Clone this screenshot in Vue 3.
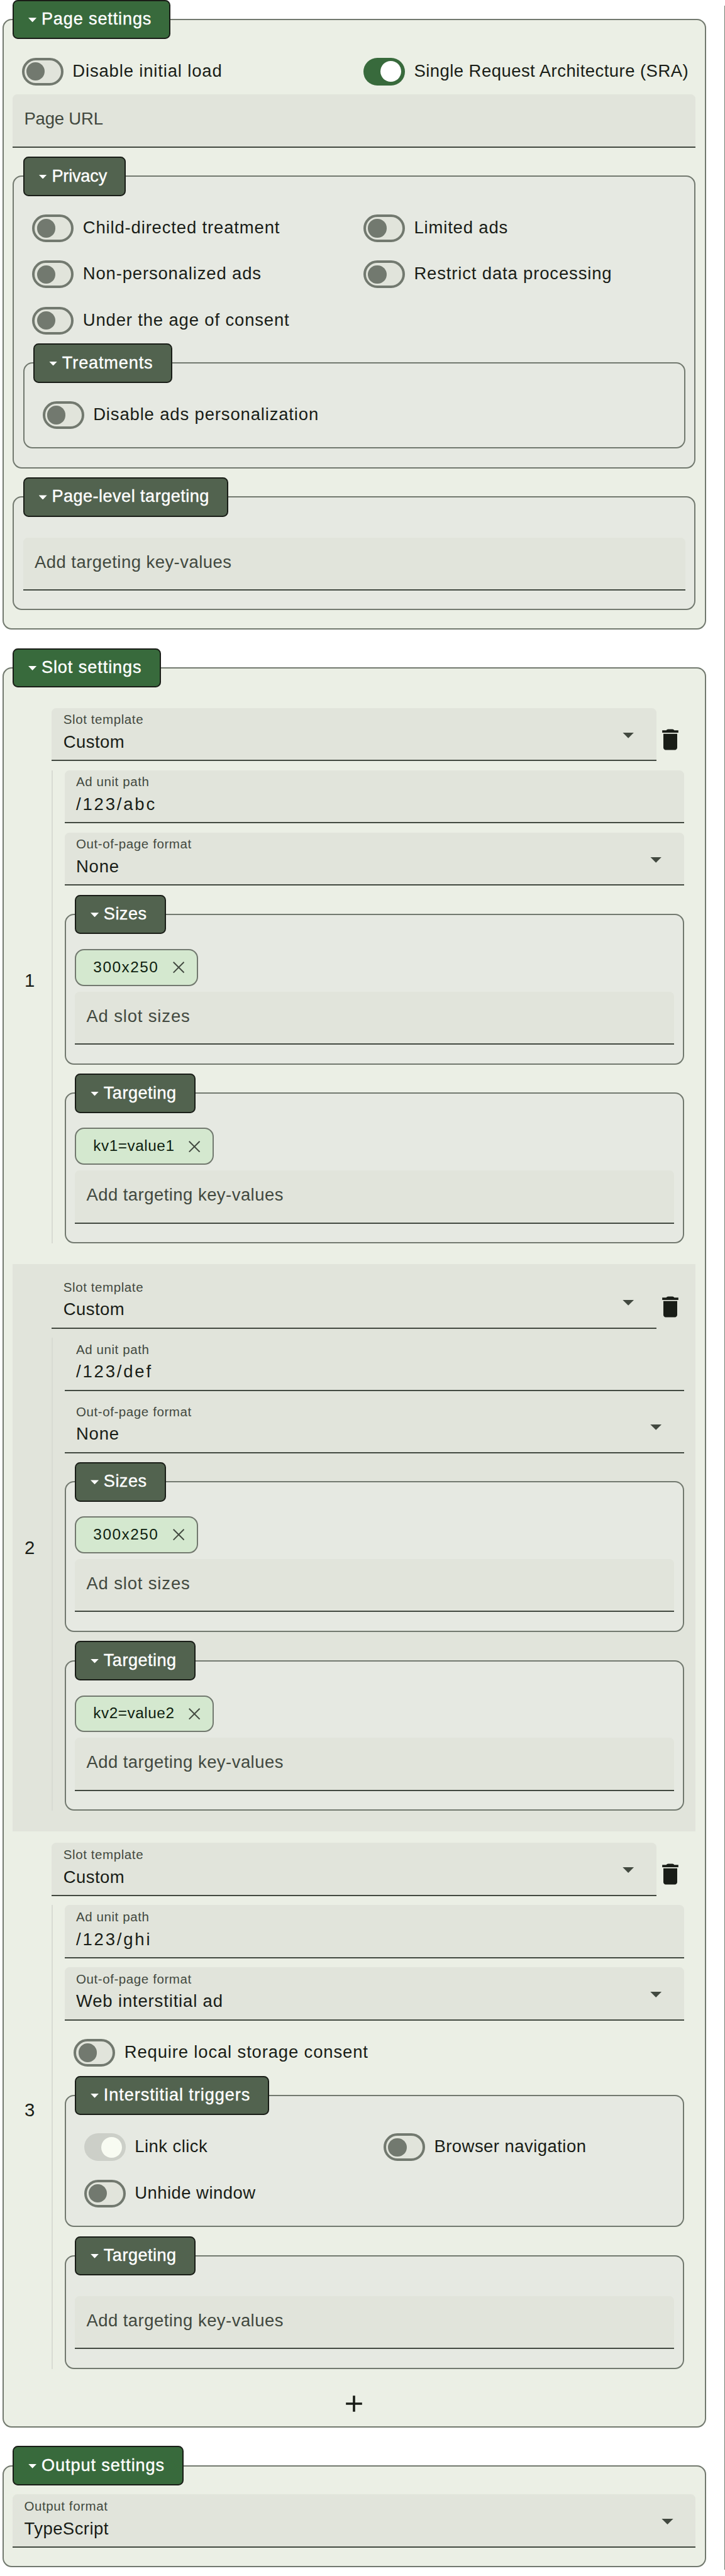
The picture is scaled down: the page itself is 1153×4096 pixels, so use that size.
<script setup>
import { ref } from 'vue'

const privacy = [
  'Child-directed treatment',
  'Limited ads',
  'Non-personalized ads',
  'Restrict data processing',
  'Under the age of consent',
]

const slots = ref([
  { path: '/123/abc', format: 'None', sizes: ['300x250'], targeting: ['kv1=value1'] },
  { path: '/123/def', format: 'None', sizes: ['300x250'], targeting: ['kv2=value2'] },
  {
    path: '/123/ghi',
    format: 'Web interstitial ad',
    triggers: [
      { label: 'Link click', locked: true },
      { label: 'Browser navigation' },
      { label: 'Unhide window' },
    ],
    targeting: [],
  },
])
</script>

<template>
  <div class="page">
    <main class="settings">
      <fieldset class="group primary">
        <legend><i class="caret"></i><span>Page settings</span></legend>
        <div class="switches">
          <label class="switch"><i class="track"></i><span>Disable initial load</span></label>
          <label class="switch"><i class="track on"></i><span class="snug">Single Request Architecture (SRA)</span></label>
        </div>
        <div class="field"><span class="placeholder tight">Page URL</span></div>

        <fieldset class="group">
          <legend><i class="caret"></i><span class="tight">Privacy</span></legend>
          <div class="switches">
            <label v-for="p in privacy" :key="p" class="switch"><i class="track"></i><span>{{ p }}</span></label>
          </div>
          <fieldset class="group">
            <legend><i class="caret"></i><span>Treatments</span></legend>
            <div class="switches">
              <label class="switch"><i class="track"></i><span>Disable ads personalization</span></label>
            </div>
          </fieldset>
        </fieldset>

        <fieldset class="group">
          <legend><i class="caret"></i><span class="snug">Page-level targeting</span></legend>
          <div class="chips"></div>
          <div class="field"><span class="placeholder snug">Add targeting key-values</span></div>
        </fieldset>
      </fieldset>

      <fieldset class="group primary">
        <legend><i class="caret"></i><span class="wide">Slot settings</span></legend>
        <section v-for="(slot, i) in slots" :key="slot.path" class="slot">
          <div class="index">{{ i + 1 }}</div>
          <div class="slot-body">
            <div class="template-row">
              <div class="field select">
                <span class="caption">Slot template</span><span class="value snug">Custom</span><i class="arrow"></i>
              </div>
              <svg class="icon" viewBox="0 0 24 24">
                <path d="M6 19c0 1.1.9 2 2 2h8c1.1 0 2-.9 2-2V7H6v12zM19 4h-3.5c-.5-.6-.9-1-1.6-1h-3.8c-.7 0-1.1.4-1.6 1H5v2h14V4z" />
              </svg>
            </div>
            <div class="options">
              <div class="field">
                <span class="caption">Ad unit path</span><span class="value num">{{ slot.path }}</span>
              </div>
              <div class="field select">
                <span class="caption">Out-of-page format</span><span class="value">{{ slot.format }}</span><i class="arrow"></i>
              </div>

              <fieldset v-if="slot.sizes" class="group">
                <legend><i class="caret"></i><span class="snug">Sizes</span></legend>
                <div class="chips">
                  <span v-for="s in slot.sizes" :key="s" class="chip">
                    <span class="chip-size">{{ s }}</span>
                    <svg class="close" viewBox="0 0 10 10"><path d="M.4.4l9.2 9.2M9.6.4L.4 9.6" /></svg>
                  </span>
                </div>
                <div class="field"><span class="placeholder">Ad slot sizes</span></div>
              </fieldset>

              <template v-if="slot.triggers">
                <div class="switches">
                  <label class="switch"><i class="track"></i><span>Require local storage consent</span></label>
                </div>
                <fieldset class="group">
                  <legend><i class="caret"></i><span class="wide">Interstitial triggers</span></legend>
                  <div class="switches">
                    <label v-for="t in slot.triggers" :key="t.label" class="switch">
                      <i class="track" :class="{ 'on locked': t.locked }"></i><span class="snug">{{ t.label }}</span>
                    </label>
                  </div>
                </fieldset>
              </template>

              <fieldset class="group">
                <legend><i class="caret"></i><span class="snug">Targeting</span></legend>
                <div class="chips">
                  <span v-for="kv in slot.targeting" :key="kv" class="chip">
                    <span class="chip-kv">{{ kv }}</span>
                    <svg class="close" viewBox="0 0 10 10"><path d="M.4.4l9.2 9.2M9.6.4L.4 9.6" /></svg>
                  </span>
                </div>
                <div class="field"><span class="placeholder snug">Add targeting key-values</span></div>
              </fieldset>
            </div>
          </div>
        </section>
        <svg class="icon add" viewBox="0 0 24 24"><path d="M19 13h-6v6h-2v-6H5v-2h6V5h2v6h6v2z" /></svg>
      </fieldset>

      <fieldset class="group primary">
        <legend><i class="caret"></i><span class="wide">Output settings</span></legend>
        <div class="field select">
          <span class="caption">Output format</span><span class="value snug">TypeScript</span><i class="arrow"></i>
        </div>
      </fieldset>
    </main>
    <aside class="preview"></aside>
  </div>
</template>

<style>
body {
  margin: 0;
  background: #fff;
  overflow: hidden;
}
</style>

<style scoped>
.page {
  zoom: 1.8333;
  display: flex;
  justify-content: space-between;
  width: 628.95px;
  height: 2234px;
  box-sizing: border-box;
  padding-left: 2px;
  font-family: 'Liberation Sans', Arial, sans-serif;
  font-size: 15px;
  line-height: 20px;
  letter-spacing: 0.46px;
  color: #191d17;
}
.page * {
  box-sizing: border-box;
}
.snug {
  letter-spacing: 0.25px;
}
.tight {
  letter-spacing: -0.1px;
}
.wide {
  letter-spacing: 0.5px;
}
.settings {
  width: 610.5px;
  display: flex;
  flex-direction: column;
  gap: 16px;
}
.preview {
  width: 0.6px;
  margin: 5px 0 5px;
  background: #72796f;
}

.group {
  margin: 0 0 8px;
  min-width: 0;
  padding: 8px 7.9px;
  border: 1.1px solid #72796f;
  border-radius: 8px;
  background: #e6e9e2;
}
.group.primary {
  margin: 0;
  background: #ebefe5;
}
legend {
  display: flex;
  align-items: center;
  height: 34px;
  padding: 0 15.4px 0 12.5px;
  border: 1.1px solid #191d17;
  border-radius: 4.5px;
  background: #52634f;
  color: #fff;
  font-size: 14.8px;
  -webkit-text-stroke: 0.2px #fff;
}
.primary > legend {
  background: #386a3c;
}
legend span {
  position: relative;
  top: -0.3px;
  white-space: nowrap;
}
.caret {
  width: 7.2px;
  height: 3.8px;
  margin: 0.6px 4.2px 0 0;
  background: #fff;
  clip-path: polygon(0 0, 100% 0, 50% 100%);
}

.switches {
  display: grid;
  grid-template-columns: 1fr 1fr;
}
.switch {
  display: flex;
  align-items: center;
  gap: 7.9px;
  height: 40px;
  padding-left: 8px;
  white-space: nowrap;
}
.switch span {
  position: relative;
  top: -0.3px;
}
.track {
  display: flex;
  align-items: center;
  flex: none;
  width: 36px;
  height: 24px;
  padding-left: 1.8px;
  border: 2.2px solid #72796f;
  border-radius: 12px;
  background: #e1e4db;
}
.track::before {
  content: '';
  width: 16px;
  height: 16px;
  border-radius: 50%;
  background: #72796f;
}
.track.on {
  border: 0;
  padding-left: 15px;
  background: #386a3c;
}
.track.on::before {
  width: 18px;
  height: 18px;
  background: #fff;
}
.track.locked {
  background: #cccfc8;
}
.track.locked::before {
  background: #f8fbf2;
}

.field {
  display: flex;
  flex-direction: column;
  height: 46px;
  margin-bottom: 8px;
  padding: 0 10px;
  border-bottom: 1.1px solid #424940;
  border-radius: 4px 4px 0 0;
  background: #e1e4db;
  position: relative;
}
.placeholder {
  margin-top: 11.5px;
  color: #424940;
}
.caption {
  margin-top: 4px;
  font-size: 11.2px;
  line-height: 12px;
  letter-spacing: 0.32px;
  color: #424940;
}
.value {
  margin-top: 3.75px;
}
.value.num {
  letter-spacing: 1.55px;
}
.arrow {
  position: absolute;
  right: 19.5px;
  top: 21px;
  width: 10px;
  height: 5px;
  background: #424940;
  clip-path: polygon(0 0, 100% 0, 50% 100%);
}

.slot {
  display: flex;
  padding: 10px 10px 10px 0;
}
.slot:nth-of-type(even) {
  background: #e1e4db;
}
.index {
  display: flex;
  align-items: center;
  justify-content: center;
  width: 30px;
  margin-right: 4px;
  font-size: 16px;
}
.slot-body {
  flex: 1;
  min-width: 0;
}
.template-row {
  display: flex;
  align-items: center;
}
.template-row .field {
  flex: 1;
}
.icon {
  display: block;
  width: 24px;
  height: 24px;
  fill: #191d17;
}
.icon.add {
  margin: 0 auto;
}
.options {
  padding-left: 9.9px;
  border-left: 1.1px solid #d8dbd3;
}

.chips {
  display: flex;
  margin: 5px 0;
}
.chips:empty {
  margin: 0;
  height: 10px;
}
.chip {
  display: flex;
  align-items: center;
  height: 32px;
  padding: 0 10.4px 0 14.9px;
  border: 1.1px solid #72796f;
  border-radius: 8px;
  background: #d4e8cf;
  color: #0f1f10;
  font-size: 13.3px;
}
.chip span {
  position: relative;
  top: -0.3px;
}
.chip-size {
  letter-spacing: 0.82px;
}
.chip-kv {
  letter-spacing: 0.28px;
}
.close {
  width: 10px;
  height: 10px;
  margin-left: 12.4px;
  fill: none;
  stroke: #424940;
  stroke-width: 1.1;
}
</style>
